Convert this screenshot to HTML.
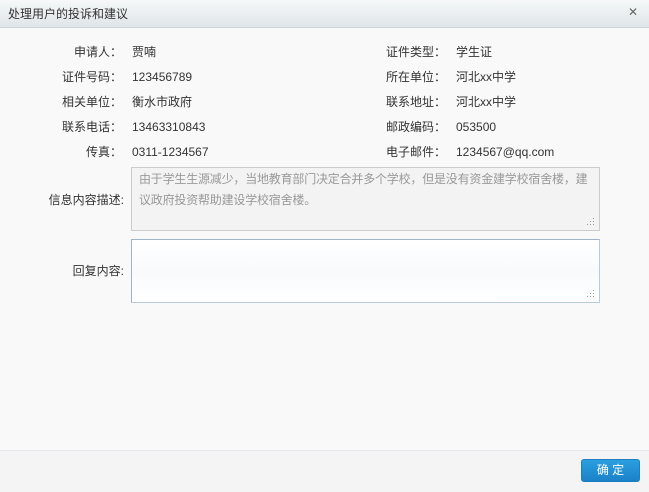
<!DOCTYPE html>
<html><head><meta charset="utf-8"><style>
body{margin:0;width:649px;height:491px;background:#f9f9f9;font-family:"Liberation Sans","Noto Sans CJK SC",sans-serif;font-size:12px;color:#333;position:relative;overflow:hidden}
.hd{position:absolute;left:0;top:0;width:649px;height:27px;background:linear-gradient(#f6f8f9,#dfe5e8);border-bottom:1px solid #cfd6da}
.hd span{position:absolute;left:8px;top:6px;font-size:12px;line-height:16px;color:#333}
.hd i{position:absolute;right:11px;top:5px;font-style:normal;font-size:12px;line-height:14px;color:#666}
.l,.r{position:absolute;white-space:nowrap;line-height:16px;height:16px}
.l{text-align:right;width:120px}
.ta{position:absolute;left:131px;width:469px;border:1px solid #ccc;color:#999;line-height:21px;padding:0 0 0 7px;box-sizing:border-box}
.ft{position:absolute;left:0;top:450px;width:649px;height:41px;background:#f4f4f4;border-top:1px solid #e4e8ec}
.btn{position:absolute;left:581px;top:459px;width:59px;height:23px;background:linear-gradient(#2a9fe0,#1b82c8);border:1px solid #1a7fc2;border-radius:3px;box-sizing:border-box;color:#fff;text-align:center;line-height:21px;font-size:12px}
.grip{position:absolute;right:3px;bottom:3px}
</style></head><body>
<div class="hd"><span>处理用户的投诉和建议</span><i>✕</i></div>
<div class="l" style="left:2px;top:44px">申请人：</div><div class="r" style="left:132px;top:44px">贾喃</div>
<div class="l" style="left:326px;top:44px">证件类型：</div><div class="r" style="left:456px;top:44px">学生证</div>
<div class="l" style="left:2px;top:69px">证件号码：</div><div class="r" style="left:132px;top:69px">123456789</div>
<div class="l" style="left:326px;top:69px">所在单位：</div><div class="r" style="left:456px;top:69px">河北xx中学</div>
<div class="l" style="left:2px;top:94px">相关单位：</div><div class="r" style="left:132px;top:94px">衡水市政府</div>
<div class="l" style="left:326px;top:94px">联系地址：</div><div class="r" style="left:456px;top:94px">河北xx中学</div>
<div class="l" style="left:2px;top:119px">联系电话：</div><div class="r" style="left:132px;top:119px">13463310843</div>
<div class="l" style="left:326px;top:119px">邮政编码：</div><div class="r" style="left:456px;top:119px">053500</div>
<div class="l" style="left:2px;top:144px">传真：</div><div class="r" style="left:132px;top:144px">0311-1234567</div>
<div class="l" style="left:326px;top:144px">电子邮件：</div><div class="r" style="left:456px;top:144px">1234567@qq.com</div>
<div class="l" style="left:4px;top:192px">信息内容描述:</div>
<div class="ta" style="top:167px;height:64px;background:#f3f3f3;padding-top:1px;letter-spacing:-0.2px">由于学生生源减少，当地教育部门决定合并多个学校，但是没有资金建学校宿舍楼，建议政府投资帮助建设学校宿舍楼。<svg class="grip" width="10" height="10"><g fill="#999"><rect x="7" y="1" width="1" height="1"/><rect x="4" y="4" width="1" height="1"/><rect x="7" y="4" width="1" height="1"/><rect x="1" y="7" width="1" height="1"/><rect x="4" y="7" width="1" height="1"/><rect x="7" y="7" width="1" height="1"/></g></svg></div>
<div class="l" style="left:4px;top:263px">回复内容:</div>
<div class="ta" style="top:239px;height:64px;background:linear-gradient(#fff,#f8fafc 50%,#fff);border-color:#9fb4c6 #b8cbd9 #b8cbd9 #9fb4c6"><svg class="grip" width="10" height="10"><g fill="#999"><rect x="7" y="1" width="1" height="1"/><rect x="4" y="4" width="1" height="1"/><rect x="7" y="4" width="1" height="1"/><rect x="1" y="7" width="1" height="1"/><rect x="4" y="7" width="1" height="1"/><rect x="7" y="7" width="1" height="1"/></g></svg></div>
<div class="ft"></div>
<div class="btn">确 定</div>
</body></html>
